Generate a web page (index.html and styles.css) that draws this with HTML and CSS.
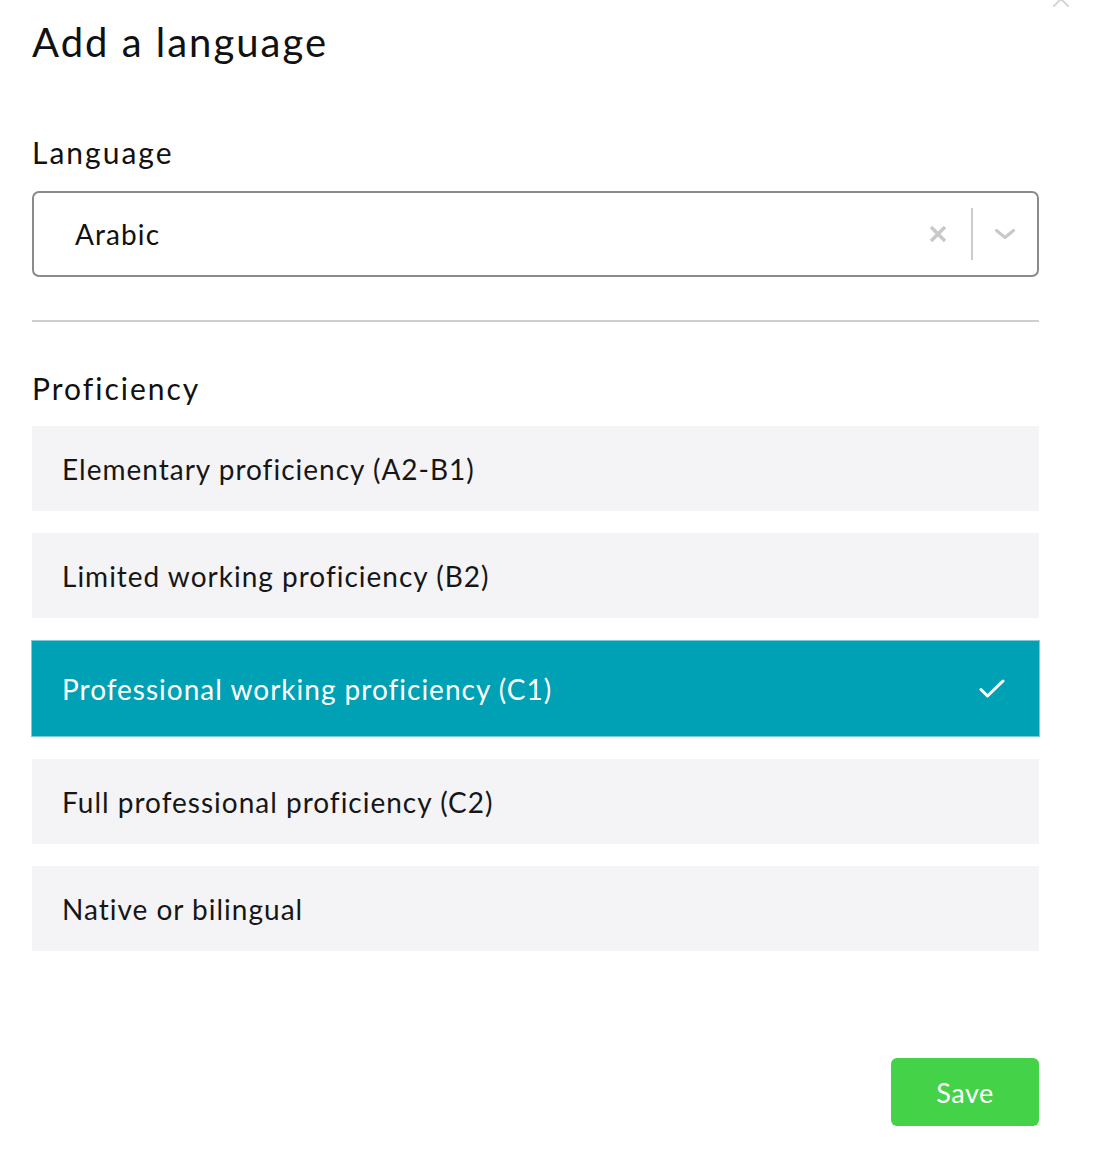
FILE: index.html
```html
<!DOCTYPE html>
<html lang="en">
<head>
    <meta charset="UTF-8">
    <meta name="viewport" content="width=device-width, initial-scale=1.0">
    <title>Add a language</title>
    <link rel="stylesheet" href="styles.css">
</head>
<body>
    <div class="modal">
        <button class="close-btn" aria-label="Close">
            <svg width="20" height="20" viewBox="0 0 20 20"><path d="M3 3 L17 17 M17 3 L3 17" stroke="#d6d6d6" stroke-width="2" stroke-linecap="round"/></svg>
        </button>

        <h2 class="title">Add a language</h2>

        <label class="field-label">Language</label>
        <div class="select">
            <span class="select-value">Arabic</span>
            <div class="select-icons">
                <span class="select-clear">
                    <svg width="18" height="18" viewBox="0 0 18 18"><path d="M2 2 L16 16 M16 2 L2 16" stroke="#c8c8c8" stroke-width="3.4"/></svg>
                </span>
                <span class="select-sep"></span>
                <span class="select-arrow">
                    <svg width="20" height="10" viewBox="0 0 20 10"><path d="M1.5 1.5 L10 8.5 L18.5 1.5" fill="none" stroke="#c8c8c8" stroke-width="3" stroke-linecap="round" stroke-linejoin="round"/></svg>
                </span>
            </div>
        </div>

        <hr class="divider">

        <label class="field-label">Proficiency</label>
        <ul class="options">
            <li class="option">Elementary proficiency (A2-B1)</li>
            <li class="option">Limited working proficiency (B2)</li>
            <li class="option selected">
                <span>Professional working proficiency (C1)</span>
                <svg width="26" height="20" viewBox="0 0 26 20"><path d="M2 10.5 L8.5 17 L24 2" fill="none" stroke="#ffffff" stroke-width="3" stroke-linecap="round" stroke-linejoin="round"/></svg>
            </li>
            <li class="option">Full professional proficiency (C2)</li>
            <li class="option">Native or bilingual</li>
        </ul>

        <div class="actions">
            <button class="save-btn">Save</button>
        </div>
    </div>
</body>
</html>
```

FILE: styles.css
```css
body {
    margin: 0;
    font-family: Lato, "Open Sans", sans-serif;
    background-color: #ffffff;
    color: #111111;
}

.modal {
    position: relative;
    width: 1007px;
    padding: 0 0 0 32px;
}

.close-btn {
    position: absolute;
    top: -11px;
    left: 1051px;
    padding: 0;
    border: none;
    background: none;
}

.title {
    margin: 0;
    padding-top: 17px;
    font-size: 40px;
    font-weight: 400;
    line-height: 50px;
    letter-spacing: 2px;
}

.field-label {
    display: block;
    font-size: 30px;
    line-height: 40px;
    letter-spacing: 2px;
}

.modal > .field-label:nth-of-type(1) {
    margin-top: 65px;
    margin-bottom: 19px;
}

.select {
    display: flex;
    align-items: center;
    height: 82px;
    border: 2px solid #8a8a8a;
    border-radius: 7px;
    padding-left: 41px;
}

.select-value {
    flex: 1;
    font-size: 28px;
    letter-spacing: 1.1px;
}

.select-icons {
    display: flex;
    align-items: center;
    padding-right: 22px;
}

.select-clear {
    display: flex;
    margin-right: 24px;
}

.select-sep {
    width: 2px;
    height: 52px;
    background-color: #cccccc;
    margin-right: 22px;
}

.select-arrow {
    display: flex;
}

.divider {
    border: none;
    height: 2px;
    background-color: #cfcfcf;
    margin: 43px 0 0 0;
}

.modal > .field-label:nth-of-type(2) {
    margin-top: 46px;
    margin-bottom: 18px;
}

.options {
    list-style: none;
    margin: 0;
    padding: 0;
    display: flex;
    flex-direction: column;
    gap: 22px;
}

.option {
    display: flex;
    justify-content: space-between;
    align-items: center;
    height: 85px;
    padding: 0 34px 0 30px;
    background-color: #f4f4f6;
    font-size: 28px;
    letter-spacing: 1px;
    color: #161616;
}

.option.selected {
    height: 95px;
    background-color: #00a1b5;
    border: 1px solid #7fcbd5;
    margin: 0 -1px;
    color: #ffffff;
}

.actions {
    display: flex;
    justify-content: flex-end;
    margin-top: 107px;
}

.save-btn {
    width: 148px;
    height: 68px;
    border: none;
    border-radius: 6px;
    background-color: #44d249;
    color: #ffffff;
    font-family: Lato, "Open Sans", sans-serif;
    font-size: 27px;
    letter-spacing: 0.5px;
    cursor: pointer;
}
```
